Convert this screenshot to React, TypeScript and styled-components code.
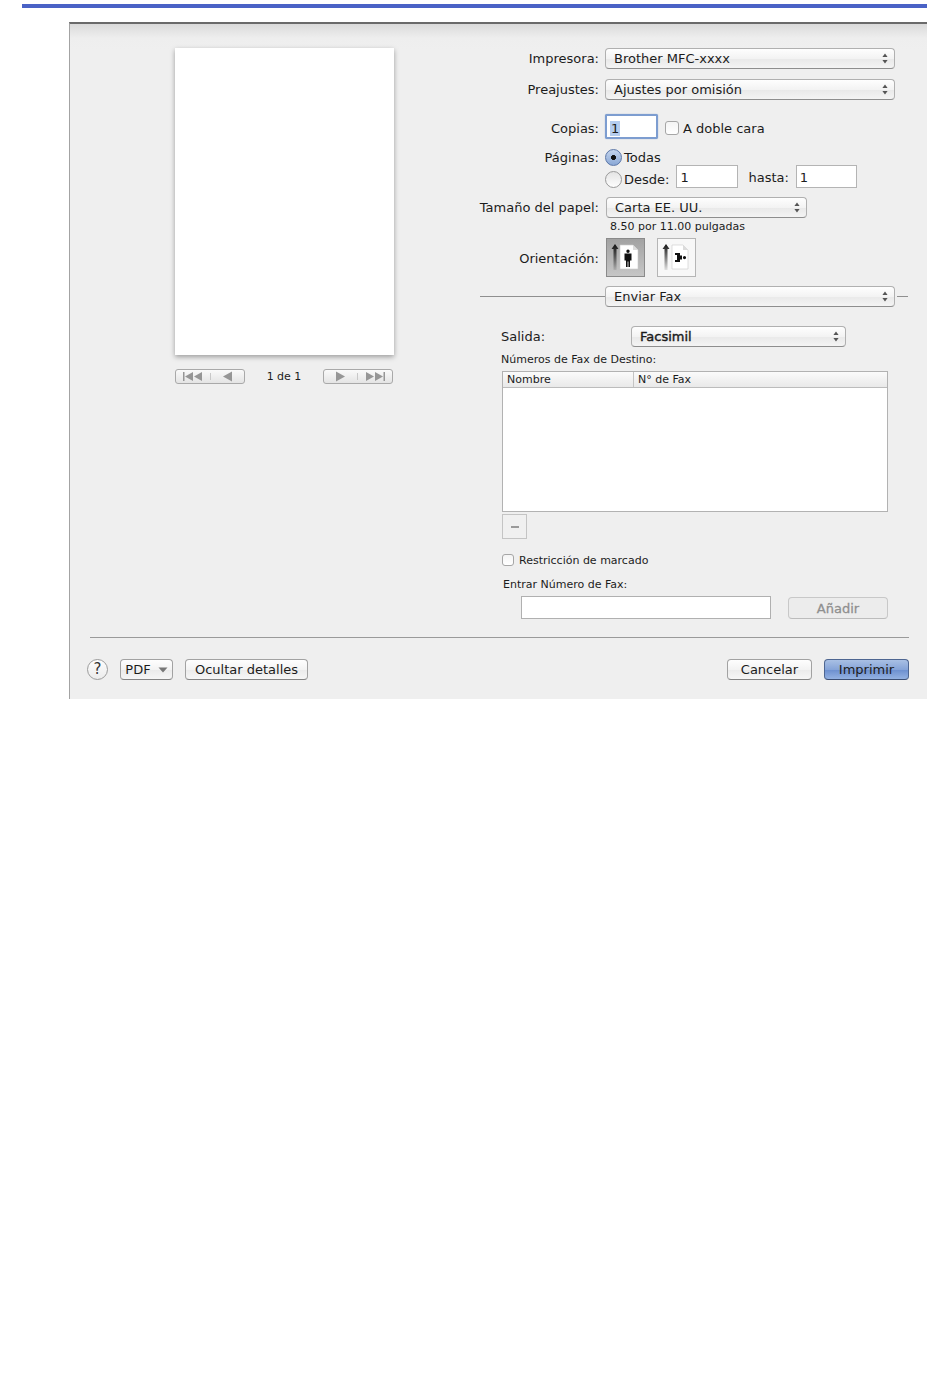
import styled, { createGlobalStyle } from "styled-components";

const GlobalStyle = createGlobalStyle`
  html, body {
    margin: 0;
    background: #fff;
  }
  body {
    font-family: "DejaVu Sans", "Liberation Sans", sans-serif;
    font-size: 13px;
    color: #1c1c1c;
  }
`;

const Page = styled.div`
  width: 950px;
  height: 1387px;
  overflow: hidden;
`;

const TopRule = styled.div`
  height: 4px;
  margin: 4px 23px 0 22px;
  background: #4a62c6;
`;

const Dialog = styled.div`
  box-sizing: border-box;
  width: 858px;
  height: 677px;
  margin: 14px 0 0 69px;
  border-left: 1px solid #a3a3a3;
  border-top: 2px solid #6a6a6a;
  background: linear-gradient(#dadada 0, #eeeeee 14px, #efefef 26px);
`;

const Body = styled.div`
  display: flex;
`;

const PreviewPane = styled.div`
  width: 409px;
  padding: 24px 0 0 105px;
  box-sizing: border-box;
`;

const Paper = styled.div`
  width: 219px;
  height: 307px;
  background: #fff;
  box-shadow: 0 2px 5px rgba(0, 0, 0, 0.35);
`;

const Pager = styled.div`
  display: flex;
  align-items: center;
  justify-content: space-between;
  width: 218px;
  margin-top: 14px;
  font-size: 11px;
`;

const PagerButton = styled.div`
  box-sizing: border-box;
  width: 70px;
  height: 15px;
  border: 1px solid #a9a9a9;
  border-radius: 3px;
  background: linear-gradient(#fafafa, #e4e4e4);
  display: flex;
  align-items: center;
  justify-content: center;
`;

const SettingsPane = styled.div`
  flex: 1;
  padding-top: 24px;
`;

const Row = styled.div<{ $top?: number; $height: number }>`
  display: grid;
  grid-template-columns: 120px 1fr;
  column-gap: 6px;
  align-items: center;
  height: ${(p) => p.$height}px;
  margin-top: ${(p) => p.$top ?? 0}px;
`;

const Label = styled.div<{ $drop?: number }>`
  padding-top: ${(p) => p.$drop ?? 0}px;
  text-align: right;
  white-space: nowrap;
`;

const SelectBox = styled.div<{ $width: number; $heavy?: boolean; $left?: number }>`
  box-sizing: border-box;
  display: flex;
  align-items: center;
  justify-content: space-between;
  width: ${(p) => p.$width}px;
  height: 21px;
  margin-left: ${(p) => p.$left ?? 0}px;
  padding: 0 6px 0 8px;
  border: 1px solid #b0b0b0;
  border-bottom-color: #8e8e8e;
  border-radius: 4px;
  background: linear-gradient(#fefefe, #f3f3f3 50%, #e9e9e9 52%, #f4f4f4);
  -webkit-text-stroke: ${(p) => (p.$heavy ? "0.4px" : "0")};
  flex: none;
`;

const Inline = styled.div`
  display: flex;
  align-items: center;
  height: 100%;
`;

const FocusInput = styled.div`
  box-sizing: border-box;
  width: 53px;
  height: 25px;
  padding: 3px 3px;
  line-height: 19px;
  background: #fff;
  border: 2px solid #7d9dd0;
  box-shadow: 0 0 1px #6f8fc4;
  border-radius: 2px;
`;

const Selected = styled.span`
  background: #b5cdee;
  padding: 0 1px;
`;

const CopyOption = styled.div`
  display: flex;
  align-items: center;
  margin-top: 3px;
`;

const CheckBox = styled.div<{ $size: number; $left?: number }>`
  box-sizing: border-box;
  width: ${(p) => p.$size}px;
  height: ${(p) => p.$size}px;
  margin-left: ${(p) => p.$left ?? 0}px;
  border: 1px solid #a6a6a6;
  border-radius: 3px;
  background: linear-gradient(#f4f4f4, #ffffff);
  flex: none;
`;

const CheckLabel = styled.span<{ $left: number; $small?: boolean }>`
  margin-left: ${(p) => p.$left}px;
  font-size: ${(p) => (p.$small ? 11 : 13)}px;
  white-space: nowrap;
`;

const Radio = styled.div<{ $on?: boolean }>`
  box-sizing: border-box;
  width: 17px;
  height: 17px;
  border-radius: 50%;
  border: 1px solid ${(p) => (p.$on ? "#5c77a8" : "#9a9a9a")};
  background: ${(p) =>
    p.$on
      ? "radial-gradient(circle, #111 0 2.2px, transparent 2.8px), linear-gradient(#c4d4ec, #8aa8d6)"
      : "linear-gradient(#e4e4e4, #fdfdfd)"};
  flex: none;
`;

const RangeRow = styled.div`
  display: flex;
  align-items: flex-end;
  height: 100%;
`;

const RangeText = styled.span<{ $left: number; $bottom?: number }>`
  margin-left: ${(p) => p.$left}px;
  line-height: 17px;
  padding-bottom: ${(p) => p.$bottom ?? 0}px;
  white-space: nowrap;
`;

const Field = styled.div<{ $width: number; $left?: number }>`
  box-sizing: border-box;
  width: ${(p) => p.$width}px;
  height: 23px;
  margin-left: ${(p) => p.$left ?? 0}px;
  padding-left: 3px;
  line-height: 23px;
  background: #fff;
  border: 1px solid #b4b4b4;
  flex: none;
`;

const PaperNote = styled.div`
  height: 14px;
  margin: 1px 0 0 131px;
  font-size: 11px;
  line-height: 16px;
`;

const OrientationRow = styled.div`
  display: flex;
  gap: 12px;
  margin-left: 1px;
`;

const OrientationButton = styled.div<{ $active?: boolean }>`
  box-sizing: border-box;
  width: 39px;
  height: 39px;
  border: 1px solid ${(p) => (p.$active ? "#8a8a8a" : "#b5b5b5")};
  background: ${(p) => (p.$active ? "linear-gradient(#a2a2a2, #c6c6c6)" : "#f7f7f7")};
  display: flex;
  align-items: center;
  justify-content: center;
`;

const DividerRow = styled.div`
  display: flex;
  align-items: center;
  height: 21px;
  margin: 9px 0 0 1px;
`;

const DividerLine = styled.div<{ $width: number; $gap?: number }>`
  width: ${(p) => p.$width}px;
  height: 1px;
  margin-left: ${(p) => p.$gap ?? 0}px;
  background: #8f8f8f;
`;

const FaxSection = styled.div`
  padding: 19px 0 0 22px;
`;

const SalidaRow = styled.div`
  display: flex;
  align-items: center;
  height: 21px;
`;

const SalidaLabel = styled.div`
  width: 130px;
  flex: none;
`;

const SmallLabel = styled.div<{ $top: number; $left?: number }>`
  height: 14px;
  margin: ${(p) => p.$top}px 0 0 ${(p) => p.$left ?? 0}px;
  font-size: 11px;
  line-height: 16px;
  white-space: nowrap;
`;

const FaxTable = styled.div`
  box-sizing: border-box;
  width: 386px;
  height: 141px;
  margin: 5px 0 0 1px;
  background: #fff;
  border: 1px solid #b2b2b2;
`;

const TableHead = styled.div`
  display: flex;
  height: 15px;
  border-bottom: 1px solid #bcbcbc;
  background: linear-gradient(#fbfbfb, #e9e9e9);
  font-size: 11px;
  line-height: 15px;
`;

const HeadCell = styled.div<{ $width?: number }>`
  box-sizing: border-box;
  width: ${(p) => (p.$width ? `${p.$width}px` : "auto")};
  padding-left: 4px;
  border-right: ${(p) => (p.$width ? "1px solid #c4c4c4" : "none")};
`;

const MinusButton = styled.div`
  box-sizing: border-box;
  width: 25px;
  height: 25px;
  margin: 2px 0 0 1px;
  border: 1px solid #c4c4c4;
  background: #f0f0f0;
  display: flex;
  align-items: center;
  justify-content: center;
`;

const MinusMark = styled.div`
  width: 8px;
  height: 2px;
  background: #9a9a9a;
`;

const RestrictRow = styled.div`
  display: flex;
  align-items: center;
  height: 12px;
  margin: 15px 0 0 1px;
`;

const EntryRow = styled.div`
  display: flex;
  align-items: flex-end;
  height: 23px;
  margin: 5px 0 0 20px;
`;

const EntryField = styled.div`
  box-sizing: border-box;
  width: 250px;
  height: 23px;
  background: #fff;
  border: 1px solid #b0b0b0;
`;

const PushButton = styled.div<{ $width: number; $left?: number; $primary?: boolean; $disabled?: boolean }>`
  box-sizing: border-box;
  width: ${(p) => p.$width}px;
  height: ${(p) => (p.$disabled ? 22 : 21)}px;
  margin-left: ${(p) => p.$left ?? 0}px;
  border: 1px solid ${(p) => (p.$primary ? "#4e6691" : p.$disabled ? "#c8c8c8" : "#a2a2a2")};
  border-bottom-color: ${(p) => (p.$primary ? "#3c4f75" : p.$disabled ? "#bcbcbc" : "#848484")};
  border-radius: 4px;
  background: ${(p) =>
    p.$primary
      ? "linear-gradient(#a9c0e4, #86a4d8 50%, #6c8fcf 52%, #94b2e2)"
      : p.$disabled
        ? "#ececec"
        : "linear-gradient(#fefefe, #f3f3f3 50%, #ebebeb 52%, #f6f6f6)"};
  color: ${(p) => (p.$disabled ? "#8f8f8f" : "#1c1c1c")};
  -webkit-text-stroke: ${(p) => (p.$disabled ? "0.3px" : "0")};
  display: flex;
  align-items: center;
  justify-content: center;
  gap: 7px;
  flex: none;
`;

const FooterRule = styled.div`
  width: 819px;
  height: 1px;
  margin: 18px 0 0 20px;
  background: #9a9a9a;
`;

const Footer = styled.div`
  display: flex;
  align-items: center;
  height: 21px;
  margin: 21px 18px 0 17px;
`;

const HelpButton = styled.div`
  box-sizing: border-box;
  width: 21px;
  height: 21px;
  border-radius: 50%;
  border: 1px solid #9c9c9c;
  background: linear-gradient(#fdfdfd, #ececec);
  font-size: 15px;
  line-height: 19px;
  text-align: center;
  color: #333;
  flex: none;
`;

const FooterSpacer = styled.div`
  flex: 1;
`;

const Updown = () => (
  <svg width="6" height="11" viewBox="0 0 6 11">
    <path d="M3 0.5 L5.6 4 H0.4 Z M3 10.5 L5.6 7 H0.4 Z" fill="#555" />
  </svg>
);

const PagerIcons = ({ forward }: { forward?: boolean }) => (
  <svg width="68" height="13" viewBox="0 0 68 13" style={forward ? { transform: "scaleX(-1)" } : undefined}>
    <g fill="#969696">
      <rect x="7" y="2" width="1.5" height="9" />
      <path d="M9 6.5 L17 2 V11 Z M18 6.5 L26 2 V11 Z" />
      <path d="M47 6.5 L56 1.5 V11.5 Z" />
    </g>
    <rect x="34" y="3" width="1" height="7" fill="#c8c8c8" />
  </svg>
);

const OrientationIcon = ({ landscape }: { landscape?: boolean }) => (
  <svg width="37" height="37" viewBox="0 0 37 37">
    <defs>
      <linearGradient id={landscape ? "arrowB" : "arrowA"} x1="0" y1="0" x2="0" y2="1">
        <stop offset="0" stopColor="#111" />
        <stop offset="1" stopColor="#111" stopOpacity="0.1" />
      </linearGradient>
    </defs>
    <path
      d="M8 5 L11.5 10 H9.5 V31 H6.5 V10 H4.5 Z"
      fill={`url(#${landscape ? "arrowB" : "arrowA"})`}
    />
    {landscape ? (
      <>
        <path d="M14 6 H25 L30 11 V30 H14 Z" fill="#fff" stroke="#c9c9c9" strokeWidth="0.6" />
        <path d="M25 6 V11 H30 Z" fill="#dcdcdc" />
        <path
          d="M17 14 H22 V16.5 H24 V20.5 H22 V23 H17 V21 H19 V16 H17 Z M26.5 17 A1.6 1.6 0 1 1 26.5 20.2 A1.6 1.6 0 1 1 26.5 17 Z"
          fill="#111"
        />
      </>
    ) : (
      <>
        <path d="M13 6 H26 L31 11 V30 H13 Z" fill="#fff" stroke="#c9c9c9" strokeWidth="0.6" />
        <path d="M26 6 V11 H31 Z" fill="#dcdcdc" />
        <path
          d="M21 10.5 A1.7 1.7 0 1 1 21 13.9 A1.7 1.7 0 1 1 21 10.5 Z M17.5 14.6 H24.5 V21.5 H23 V28 H21.4 V22.5 H20.6 V28 H19 V21.5 H17.5 Z"
          fill="#111"
        />
      </>
    )}
  </svg>
);

const App = () => {
  return (
    <Page>
      <GlobalStyle />
      <TopRule />
      <Dialog>
        <Body>
          <PreviewPane>
            <Paper />
            <Pager>
              <PagerButton>
                <PagerIcons />
              </PagerButton>
              <span>1 de 1</span>
              <PagerButton>
                <PagerIcons forward />
              </PagerButton>
            </Pager>
          </PreviewPane>

          <SettingsPane>
            <Row $height={21}>
              <Label>Impresora:</Label>
              <SelectBox $width={290}>
                Brother MFC-xxxx
                <Updown />
              </SelectBox>
            </Row>
            <Row $top={10} $height={21}>
              <Label>Preajustes:</Label>
              <SelectBox $width={290}>
                Ajustes por omisión
                <Updown />
              </SelectBox>
            </Row>
            <Row $top={14} $height={25}>
              <Label $drop={3}>Copias:</Label>
              <Inline>
                <FocusInput>
                  <Selected>1</Selected>
                </FocusInput>
                <CopyOption>
                  <CheckBox $size={14} $left={7} />
                  <CheckLabel $left={4}>A doble cara</CheckLabel>
                </CopyOption>
              </Inline>
            </Row>
            <Row $top={10} $height={17}>
              <Label>Páginas:</Label>
              <Inline>
                <Radio $on />
                <CheckLabel $left={2}>Todas</CheckLabel>
              </Inline>
            </Row>
            <Row $top={-1} $height={23}>
              <span />
              <RangeRow>
                <Radio />
                <RangeText $left={2}>Desde:</RangeText>
                <Field $width={62} $left={7}>
                  1
                </Field>
                <RangeText $left={10} $bottom={2}>
                  hasta:
                </RangeText>
                <Field $width={61} $left={7}>
                  1
                </Field>
              </RangeRow>
            </Row>
            <Row $top={8} $height={22}>
              <Label>Tamaño del papel:</Label>
              <SelectBox $width={201} $left={1}>
                Carta EE. UU.
                <Updown />
              </SelectBox>
            </Row>
            <PaperNote>8.50 por 11.00 pulgadas</PaperNote>
            <Row $top={5} $height={39}>
              <Label $drop={2}>Orientación:</Label>
              <OrientationRow>
                <OrientationButton $active>
                  <OrientationIcon />
                </OrientationButton>
                <OrientationButton>
                  <OrientationIcon landscape />
                </OrientationButton>
              </OrientationRow>
            </Row>
            <DividerRow>
              <DividerLine $width={125} />
              <SelectBox $width={290}>
                Enviar Fax
                <Updown />
              </SelectBox>
              <DividerLine $width={11} $gap={2} />
            </DividerRow>

            <FaxSection>
              <SalidaRow>
                <SalidaLabel>Salida:</SalidaLabel>
                <SelectBox $width={215} $heavy>
                  Facsimil
                  <Updown />
                </SelectBox>
              </SalidaRow>
              <SmallLabel $top={5}>Números de Fax de Destino:</SmallLabel>
              <FaxTable>
                <TableHead>
                  <HeadCell $width={131}>Nombre</HeadCell>
                  <HeadCell>N° de Fax</HeadCell>
                </TableHead>
              </FaxTable>
              <MinusButton>
                <MinusMark />
              </MinusButton>
              <RestrictRow>
                <CheckBox $size={12} />
                <CheckLabel $left={5} $small>
                  Restricción de marcado
                </CheckLabel>
              </RestrictRow>
              <SmallLabel $top={11} $left={2}>
                Entrar Número de Fax:
              </SmallLabel>
              <EntryRow>
                <EntryField />
                <PushButton $width={100} $left={17} $disabled>
                  Añadir
                </PushButton>
              </EntryRow>
            </FaxSection>
          </SettingsPane>
        </Body>

        <FooterRule />
        <Footer>
          <HelpButton>?</HelpButton>
          <PushButton $width={53} $left={12}>
            PDF
            <svg width="10" height="6" viewBox="0 0 10 6">
              <path d="M0.5 0.5 H9.5 L5 5.5 Z" fill="#777" />
            </svg>
          </PushButton>
          <PushButton $width={123} $left={12}>
            Ocultar detalles
          </PushButton>
          <FooterSpacer />
          <PushButton $width={85}>Cancelar</PushButton>
          <PushButton $width={85} $left={12} $primary>
            Imprimir
          </PushButton>
        </Footer>
      </Dialog>
    </Page>
  );
};

export default App;
